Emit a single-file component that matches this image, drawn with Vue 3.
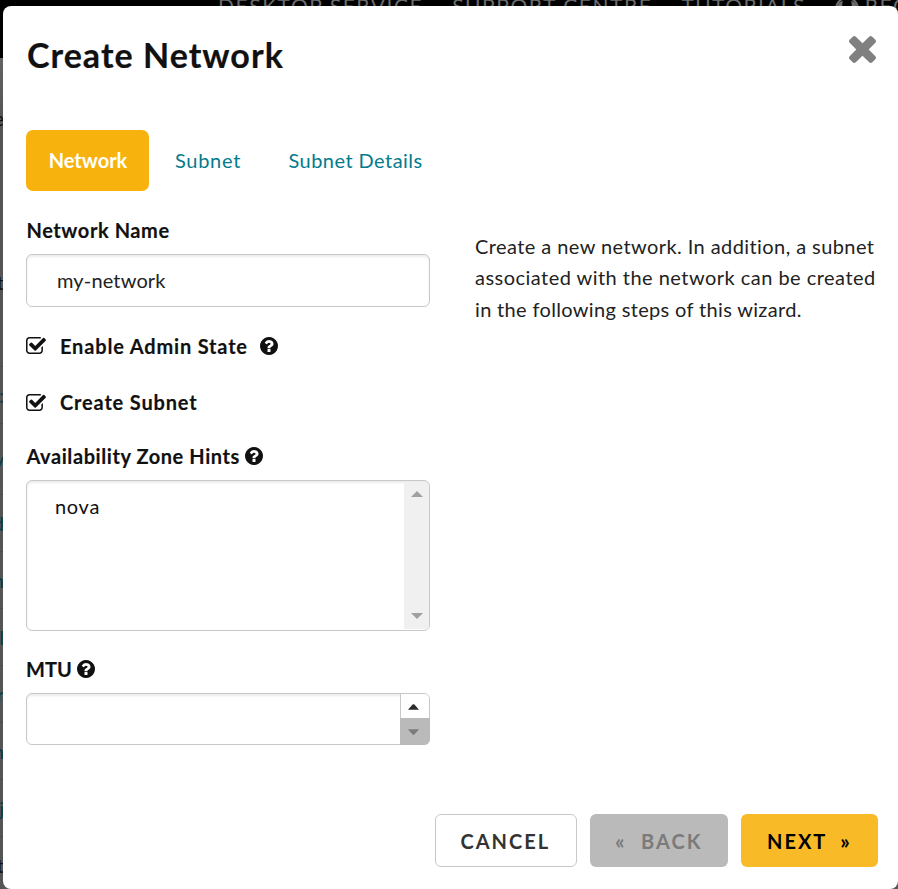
<script setup>
import { ref } from 'vue'

const name = ref('my-network')
const mtu = ref('')
const rows = ['', ':', 'v', 'd', 'n', 'l', 'r', 'h', 'j']

const question = 'M1024 1376v-192q0-14-9-23t-23-9h-192q-14 0-23 9t-9 23v192q0 14 9 23t23 9h192q14 0 23-9t9-23zm256-672q0-88-55.5-163t-138.5-116-170-41q-243 0-371 213-15 24 8 42l132 100q7 6 19 6 16 0 25-12 53-68 86-92 34-24 86-24 48 0 85.5 26t37.5 59q0 38-20 61t-68 45q-63 28-115.5 86.5t-52.5 125.5v36q0 14 9 23t23 9h192q14 0 23-9t9-23q0-19 21.5-49.5t54.5-49.5q32-18 49-28.5t46-35 44.5-48 28-60.5 12.5-81zm384 192q0 209-103 385.5t-279.5 279.5-385.5 103-385.5-103-279.5-279.5-103-385.5 103-385.5 279.5-279.5 385.5-103 385.5 103 279.5 279.5 103 385.5z'
const check = 'M1472 930v318q0 119-84.5 203.5t-203.5 84.5h-832q-119 0-203.5-84.5t-84.5-203.5v-832q0-119 84.5-203.5t203.5-84.5h832q63 0 117 25 15 7 18 23 3 17-9 29l-49 49q-10 10-23 10-3 0-9-2-23-6-45-6h-832q-66 0-113 47t-47 113v832q0 66 47 113t113 47h832q66 0 113-47t47-113v-254q0-13 9-22l64-64q10-10 23-10 6 0 12 3 20 8 20 29zm231-489l-814 814q-24 24-57 24t-57-24l-430-430q-24-24-24-57t24-57l110-110q24-24 57-24t57 24l263 263 647-647q24-24 57-24t57 24l110 110q24 24 24 57t-24 57z'
const times = 'M1490 1322q0 40-28 68l-136 136q-28 28-68 28t-68-28l-294-294-294 294q-28 28-68 28t-68-28l-136-136q-28-28-28-68t28-68l294-294-294-294q-28-28-28-68t28-68l136-136q28-28 68-28t68 28l294 294 294-294q28-28 68-28t68 28l136 136q28 28 28 68t-28 68l-294 294 294 294q28 28 28 68z'
</script>

<template>
  <div class="page">
    <div class="backdrop">
      <div class="topbar">
        <span>DESKTOP SERVICE</span>
        <span>SUPPORT CENTRE</span>
        <span class="tutorials">TUTORIALS</span>
        <span class="user">
          <svg viewBox="0 0 24 24">
            <circle cx="12" cy="12" r="11" fill="none" stroke="currentColor" stroke-width="2" />
            <path d="M2 12a10 10 0 0 1 3-7l3-1q-2 5 1 9l-5 5zM22 12a10 10 0 0 0-3-7l-3-1q2 5-1 9l5 5z" fill="currentColor" />
          </svg>
          REG
        </span>
      </div>
      <div class="behind">
        <div class="line first">e</div>
        <div class="line second">t</div>
        <div v-for="(r, i) in rows" :key="i" class="line row" :class="{ tall: i === 2 }">{{ r }}</div>
        <div class="line last">t</div>
      </div>
    </div>

    <div class="modal">
      <header class="head">
        <h1>Create Network</h1>
        <svg class="close" viewBox="302 366 1188 1188"><path :d="times" /></svg>
      </header>

      <nav class="tabs">
        <a class="tab active">Network</a>
        <a class="tab subnet">Subnet</a>
        <a class="tab details">Subnet Details</a>
      </nav>

      <div class="body">
        <div class="form">
          <label class="label name-label">Network Name</label>
          <input v-model="name" class="input" type="text" />

          <div class="check">
            <svg class="box" viewBox="64 128 1664 1408"><path :d="check" /></svg>
            <span>Enable Admin State</span>
            <svg class="help" viewBox="128 128 1536 1536"><path :d="question" /></svg>
          </div>
          <div class="check second-check">
            <svg class="box" viewBox="64 128 1664 1408"><path :d="check" /></svg>
            <span>Create Subnet</span>
          </div>

          <label class="label zone-label">
            Availability Zone Hints
            <svg class="help" viewBox="128 128 1536 1536"><path :d="question" /></svg>
          </label>
          <div class="select">
            <div class="option">nova</div>
            <div class="scroll">
              <svg viewBox="0 0 12 6"><path d="M0 6L6 0l6 6z" /></svg>
              <svg viewBox="0 0 12 6"><path d="M0 0l6 6 6-6z" /></svg>
            </div>
          </div>

          <label class="label mtu-label">
            MTU
            <svg class="help" viewBox="128 128 1536 1536"><path :d="question" /></svg>
          </label>
          <div class="spinner">
            <input v-model="mtu" class="number" type="text" />
            <div class="steps">
              <div class="up"><svg viewBox="0 0 12 6"><path d="M0 6L5 .4q1-.8 2 0L12 6z" /></svg></div>
              <div class="down"><svg viewBox="0 0 12 6"><path d="M0 0l5 5.600q1 .8 2 0L12 0z" /></svg></div>
            </div>
          </div>
        </div>

        <div class="desc">
          <div class="d1">Create a new network. In addition, a subnet</div>
          <div class="d2">associated with the network can be created</div>
          <div class="d3">in the following steps of this wizard.</div>
        </div>
      </div>

      <footer class="foot">
        <button class="btn cancel">CANCEL</button>
        <button class="btn back"><i>«</i>BACK</button>
        <button class="btn next">NEXT<i>»</i></button>
      </footer>
    </div>
  </div>
</template>

<style>
body {
  background: #585858;
}
</style>

<style scoped>
.page {
  position: relative;
  box-sizing: border-box;
  height: 889px;
  padding: 6px 0 0 3px;
  overflow: hidden;
  font-family: Lato, "Liberation Sans", sans-serif;
  font-size: 20px;
  color: #111;
}
.backdrop {
  position: absolute;
  inset: 0;
}
.topbar {
  display: flex;
  height: 58px;
  padding-left: 218px;
  background: #000;
  color: #6c6c6c;
  font-size: 21px;
  line-height: 12px;
  letter-spacing: 1.55px;
  white-space: nowrap;
  gap: 29px;
}
.tutorials {
  letter-spacing: 1.4px;
}
.user {
  display: flex;
  gap: 6px;
}
.user svg {
  flex: none;
  width: 24px;
  height: 24px;
  margin-top: -3px;
}
.behind {
  width: 4px;
  height: 831px;
  background: linear-gradient(#636363, #555 60px);
  overflow: hidden;
}
.line {
  display: flex;
  justify-content: flex-end;
  box-sizing: border-box;
  line-height: 24px;
}
.first {
  height: 162px;
  padding-top: 48px;
}
.second {
  height: 90px;
  padding-top: 50px;
}
.row {
  height: 57px;
  padding-top: 16px;
  border-bottom: 1px solid #4a4a4a;
  color: #003f4b;
}
.tall {
  height: 71px;
  padding-top: 23px;
}
.last {
  padding-top: 16px;
}
.modal {
  position: relative;
  box-sizing: border-box;
  height: 883px;
  padding: 0 20px 0 23px;
  background: #fff;
  border-radius: 8px;
}
.head {
  display: flex;
  justify-content: space-between;
  height: 124px;
}
h1 {
  margin: 29px 0 0 1px;
  font-size: 34px;
  font-weight: 700;
  line-height: 40px;
  letter-spacing: 1.03px;
  -webkit-text-stroke: .2px currentColor;
}
.close {
  width: 27px;
  height: 27px;
  margin: 30px 2px 0 0;
  fill: #808080;
}
.tabs {
  display: flex;
  height: 61px;
  line-height: 61px;
  color: #047b8c;
}
.active {
  width: 123px;
  text-align: center;
  text-indent: 1px;
  background: #f8b20e;
  border-radius: 7px;
  color: #fff;
  font-weight: 700;
}
.subnet {
  width: 139.500px;
  padding-left: 26px;
  box-sizing: border-box;
  letter-spacing: .7px;
}
.details {
  letter-spacing: .45px;
}
.body {
  display: flex;
  gap: 45px;
}
.form {
  width: 404px;
}
.label,
.check {
  display: flex;
  align-items: center;
  box-sizing: border-box;
  height: 32px;
  padding-bottom: 2px;
  font-weight: 700;
  -webkit-text-stroke: .15px currentColor;
}
.name-label {
  margin: 24px 0 7px;
  padding-left: .5px;
  letter-spacing: .58px;
}
.zone-label {
  margin: 22px 0 7px;
  padding-left: .5px;
  gap: 5px;
  letter-spacing: .57px;
}
.mtu-label {
  margin: 23px 0 7px;
  gap: 5.500px;
}
.input,
.select,
.spinner {
  display: flex;
  box-sizing: border-box;
  width: 404px;
  border: 1px solid #c8c8c8;
  border-radius: 6px;
  background: #fff;
  box-shadow: inset 0 2px 2px rgba(0, 0, 0, .08);
}
.input {
  height: 53px;
  padding: 0 30px 2px;
  font: inherit;
  color: #222;
  letter-spacing: .15px;
}
.check {
  margin-top: 24px;
  letter-spacing: .83px;
}
.box {
  width: 20px;
  height: 17px;
  margin: -1px 14px 0 0;
  fill: #111;
}
.second-check .box {
  margin-top: 1px;
}
.help {
  width: 18px;
  height: 18px;
  margin-top: 0;
  fill: #111;
}
.check .help {
  margin-left: 12px;
}
.select {
  height: 151px;
  justify-content: space-between;
}
.option {
  padding: 13px 0 0 28px;
  line-height: 24px;
  letter-spacing: .7px;
}
.scroll {
  display: flex;
  flex-direction: column;
  align-items: center;
  justify-content: space-between;
  box-sizing: border-box;
  width: 25px;
  margin: 2px 0 1px;
  padding: 8px 0 10px 0;
  background: #f0f0f0;
  border-radius: 0 4px 4px 0;
}
.scroll svg {
  width: 12px;
  height: 6px;
  fill: #a0a0a0;
}
.spinner {
  height: 52px;
}
.number {
  flex: 1;
  min-width: 0;
  padding: 0 12px;
  border: 0;
  background: none;
  font: inherit;
}
.steps {
  display: flex;
  flex-direction: column;
  width: 28px;
  border-left: 1px solid #c8c8c8;
}
.up,
.down {
  display: flex;
  flex: 1;
  align-items: center;
  justify-content: center;
}
.up {
  flex: none;
  height: 24px;
  background: #fff;
  border-radius: 0 5px 0 0;
}
.down {
  margin: 0 -1px -1px -1px;
  background: #bababa;
  border-radius: 0 0 6px 0;
}
.up svg,
.down svg {
  width: 11px;
  height: 6px;
  fill: #2b2b2b;
}
.up svg {
  margin: 1px 3px 0 0;
}
.down svg {
  margin-right: 3px;
  fill: #7b7b7b;
}
.desc {
  margin-top: 40px;
  line-height: 31.4px;
  white-space: nowrap;
  color: #222;
}
.d1 {
  letter-spacing: .42px;
}
.d2 {
  letter-spacing: .47px;
}
.d3 {
  letter-spacing: .34px;
}
.foot {
  display: flex;
  justify-content: flex-end;
  gap: 13px;
  margin-top: 69px;
}
.btn {
  display: flex;
  align-items: center;
  box-sizing: border-box;
  height: 53px;
  padding: 0;
  border: 0;
  border-radius: 6px;
  font-family: inherit;
  font-size: 20px;
  font-weight: 700;
  letter-spacing: 2px;
}
.btn i {
  font-style: normal;
  font-size: 21px;
  letter-spacing: 0;
}
.cancel {
  width: 142px;
  padding-left: 24.500px;
  border: 1px solid #c8c8c8;
  background: #fff;
  color: #333;
}
.back {
  width: 138px;
  padding-left: 25px;
  gap: 16.500px;
  background: #bababa;
  color: #7b7b7b;
}
.next {
  width: 137px;
  padding-left: 26px;
  gap: 13px;
  background: #f9ba28;
  color: #000;
}
</style>
